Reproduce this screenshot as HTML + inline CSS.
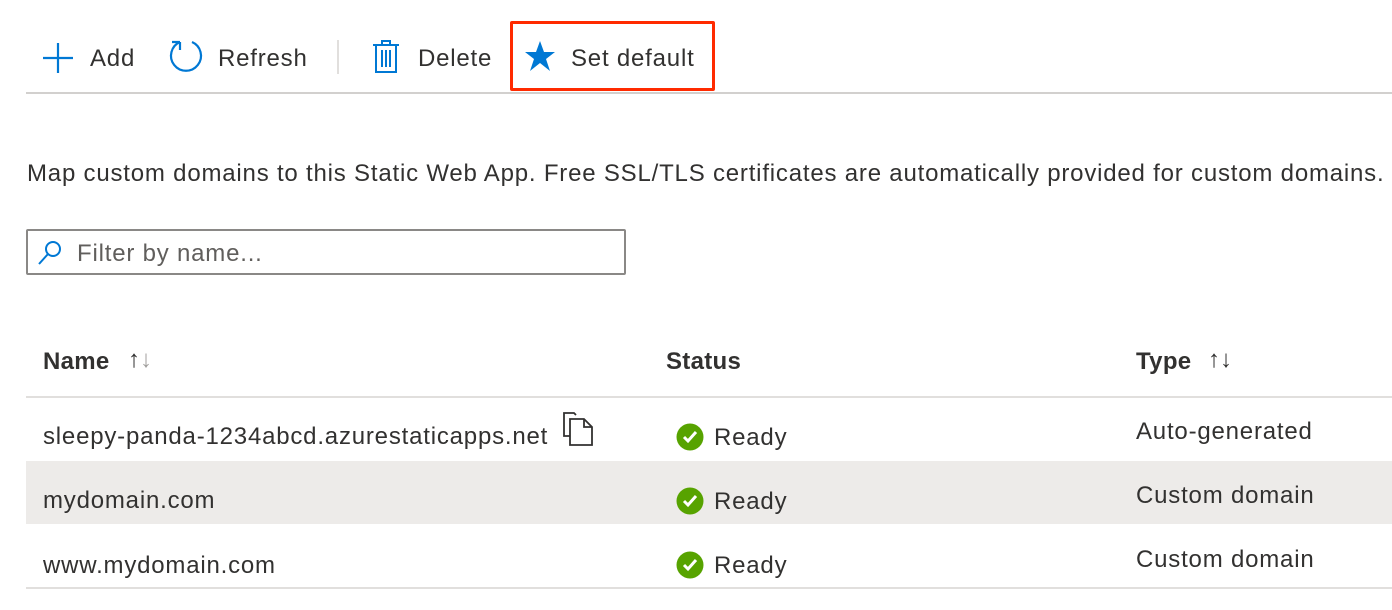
<!DOCTYPE html>
<html><head><meta charset="utf-8"><style>
body{margin:0;width:1392px;height:610px;background:#fff;font-family:"Liberation Sans",sans-serif;color:#323130;position:relative;overflow:hidden}
.a{position:absolute;white-space:nowrap;font-size:24px;line-height:28px;letter-spacing:0.8px}
.b{font-weight:bold;letter-spacing:0.3px}
.line{position:absolute;height:2px;background:#e1dfdd}
</style></head><body>
<svg class="a" style="left:42px;top:42px" width="32" height="32" viewBox="0 0 32 32"><path d="M16 1V31M1 16H31" stroke="#0078d4" stroke-width="2.2" fill="none"/></svg>
<div class="a" style="left:90px;top:45px">Add</div>
<svg class="a" style="left:168px;top:38px" width="36" height="38" viewBox="0 0 36 38"><path d="M12 4A15 15 0 1 0 24 4" stroke="#0078d4" stroke-width="2.2" fill="none"/><path d="M12 4V12M12 4H4" stroke="#0078d4" stroke-width="2.2" fill="none"/></svg>
<div class="a" style="left:218px;top:45px">Refresh</div>
<div style="position:absolute;left:337px;top:40px;width:2px;height:34px;background:#e1dfdd"></div>
<svg class="a" style="left:372px;top:40px" width="28" height="34" viewBox="0 0 28 34"><path d="M1 5H27M10 5V1H18V5M4 5V32H24V5M10 10V27M14 10V27M18 10V27" stroke="#0078d4" stroke-width="2" fill="none"/></svg>
<div class="a" style="left:418px;top:45px">Delete</div>
<svg class="a" style="left:524px;top:40px" width="32" height="32" viewBox="0 0 32 32"><path d="M16 1L20 12H31L22 19L26 31L16 23L6 31L10 19L1 12H12Z" fill="#0078d4"/></svg>
<div class="a" style="left:571px;top:45px">Set default</div>
<div style="position:absolute;left:510px;top:21px;width:199px;height:64px;border:3px solid #ff2a00;border-radius:2px"></div>
<div class="line" style="left:26px;top:92px;width:1366px;background:#d2d0ce"></div>
<div class="a" style="left:27px;top:160px">Map custom domains to this Static Web App. Free SSL/TLS certificates are automatically provided for custom domains.</div>
<div style="position:absolute;left:26px;top:229px;width:596px;height:42px;border:2px solid #8a8886;border-radius:2px"></div>
<svg class="a" style="left:37px;top:240px" width="26" height="26" viewBox="0 0 26 26"><circle cx="16" cy="9" r="7" stroke="#0078d4" stroke-width="2" fill="none"/><path d="M11 14L2 24" stroke="#0078d4" stroke-width="2"/></svg>
<div class="a" style="left:77px;top:240px;color:#605e5c">Filter by name...</div>
<div class="a b" style="left:43px;top:348px">Name</div>
<div class="a" style="left:128px;top:346px;font-size:24px;letter-spacing:0">↑<span style="color:#a19f9d">↓</span></div>
<div class="a b" style="left:666px;top:348px">Status</div>
<div class="a b" style="left:1136px;top:348px">Type</div>
<div class="a" style="left:1208px;top:346px;font-size:24px;letter-spacing:0">↑↓</div>
<div class="line" style="left:26px;top:396px;width:1366px"></div>
<div style="position:absolute;left:26px;top:461px;width:1366px;height:63px;background:#edebe9"></div>
<div class="line" style="left:26px;top:587px;width:1366px"></div>
<div class="a" style="left:43px;top:423px">sleepy-panda-1234abcd.azurestaticapps.net</div>
<svg class="a" style="left:562px;top:412px" width="32" height="34" viewBox="0 0 32 34"><path d="M8 24H2V1H12L14 3M8 7H22L30 15V33H8Z M22 7V15H30" stroke="#323130" stroke-width="1.8" fill="none"/></svg>
<div class="a" style="left:43px;top:487px">mydomain.com</div>
<div class="a" style="left:43px;top:552px">www.mydomain.com</div>
<svg class="a" style="left:676px;top:423px" width="28" height="28" viewBox="0 0 28 28"><circle cx="14" cy="14" r="13.5" fill="#57a300"/><path d="M8 14L12 18L20 9" stroke="#fff" stroke-width="3" fill="none"/></svg>
<div class="a" style="left:714px;top:424px">Ready</div>
<svg class="a" style="left:676px;top:487px" width="28" height="28" viewBox="0 0 28 28"><circle cx="14" cy="14" r="13.5" fill="#57a300"/><path d="M8 14L12 18L20 9" stroke="#fff" stroke-width="3" fill="none"/></svg>
<div class="a" style="left:714px;top:488px">Ready</div>
<svg class="a" style="left:676px;top:551px" width="28" height="28" viewBox="0 0 28 28"><circle cx="14" cy="14" r="13.5" fill="#57a300"/><path d="M8 14L12 18L20 9" stroke="#fff" stroke-width="3" fill="none"/></svg>
<div class="a" style="left:714px;top:552px">Ready</div>
<div class="a" style="left:1136px;top:418px">Auto-generated</div>
<div class="a" style="left:1136px;top:482px">Custom domain</div>
<div class="a" style="left:1136px;top:546px">Custom domain</div>
</body></html>
